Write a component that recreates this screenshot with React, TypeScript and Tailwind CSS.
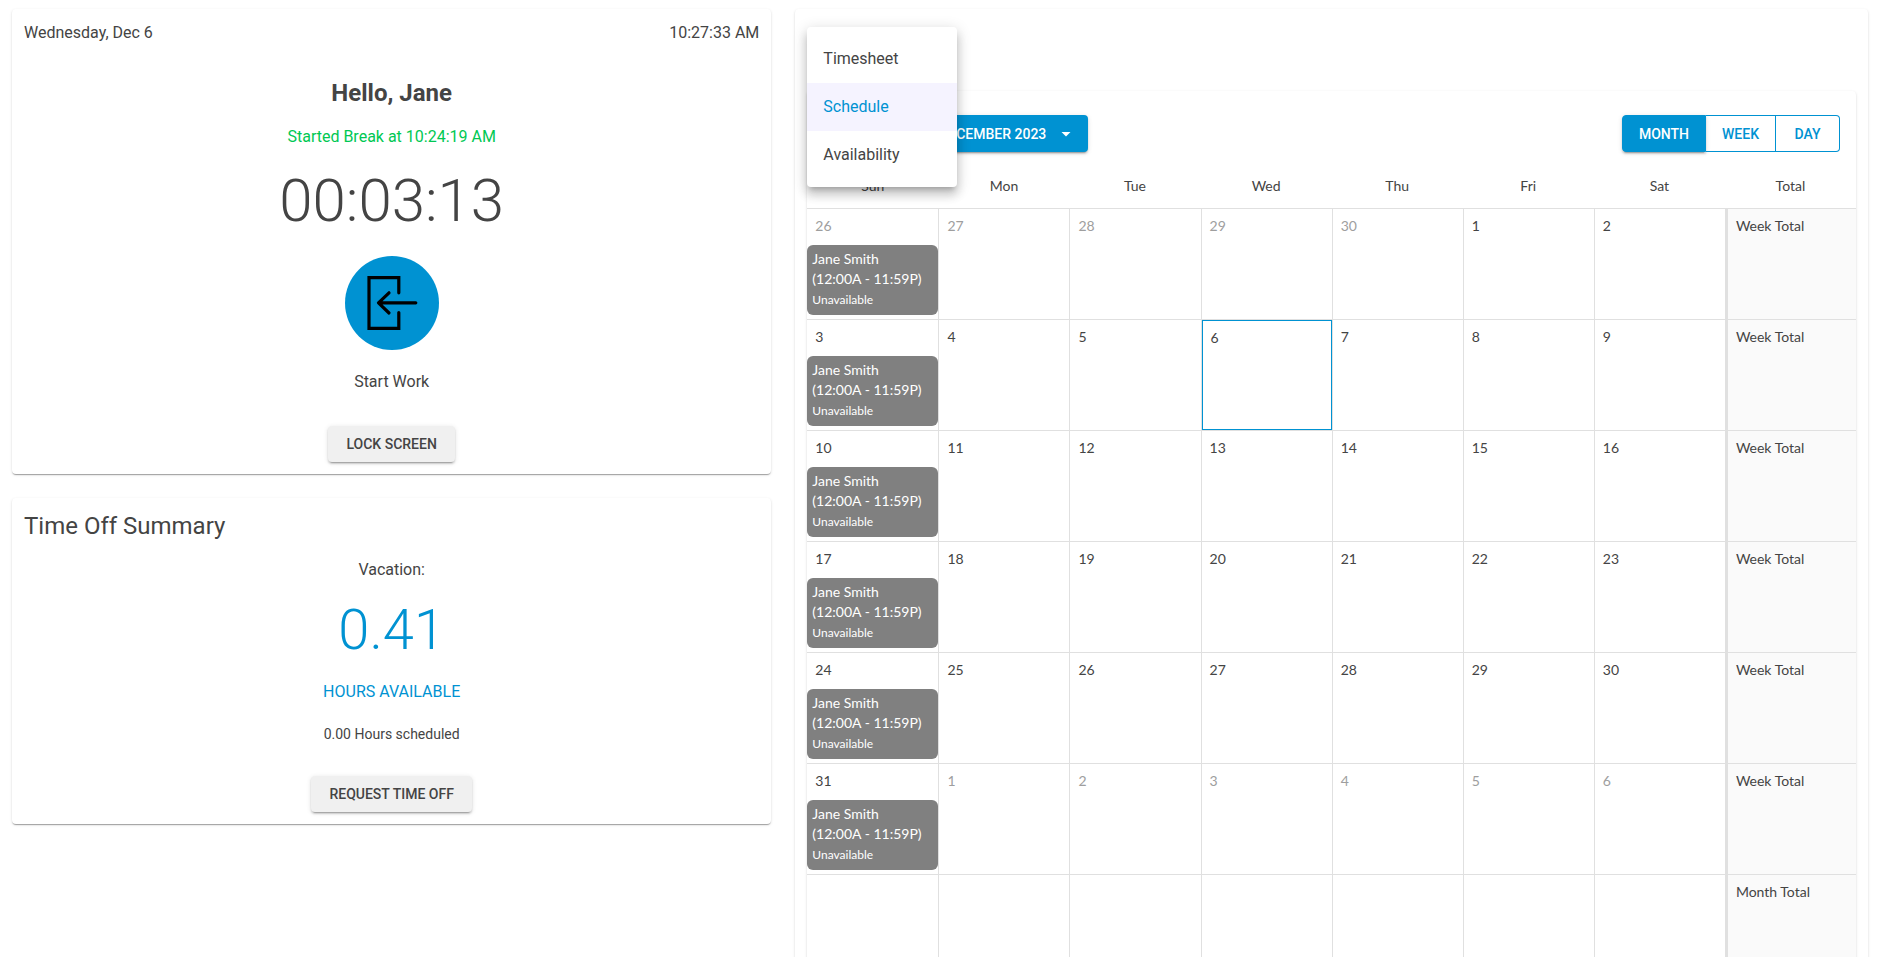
import { useState } from "react";
import clsx from "clsx";

const DAYS = ["Sun", "Mon", "Tue", "Wed", "Thu", "Fri", "Sat"];

// 42 days, starting on Sunday, Nov 26
const START = new Date(2023, 10, 26);
const WEEKS = [0, 1, 2, 3, 4, 5].map((week) =>
  DAYS.map((_, day) => {
    const date = new Date(START);
    date.setDate(START.getDate() + week * 7 + day);
    return {
      label: date.getDate(),
      muted: date.getMonth() !== 11,
      today: date.getMonth() === 11 && date.getDate() === 6,
    };
  })
);

const MENU = ["Timesheet", "Schedule", "Availability"];
const VIEWS = ["MONTH", "WEEK", "DAY"];

const CARD =
  "rounded bg-white shadow-[0_2px_1px_-1px_rgba(0,0,0,0.2),0_1px_1px_0_rgba(0,0,0,0.14),0_1px_3px_0_rgba(0,0,0,0.12)]";
const RAISED =
  "shadow-[0_3px_1px_-2px_rgba(0,0,0,0.2),0_2px_2px_0_rgba(0,0,0,0.14),0_1px_5px_0_rgba(0,0,0,0.12)]";
const GRAY_BUTTON = "h-9 rounded bg-[#f0f0f0] px-[18px] text-sm font-medium";
const DAY_CELL = "border-t border-l border-[#e0e0e0] p-0 first:border-l-0";
const TOTAL_CELL = "border-t border-l-3 border-[#e0e0e0] bg-[#fafafa] px-2 pt-[7px]";

function EnterIcon() {
  return (
    <svg viewBox="0 0 94 94" className="size-[94px]" fill="none" stroke="#000" strokeWidth="3.2">
      <path d="M53.8 36.8V21.6H24V72.4H53.8V56.6" strokeLinecap="round" />
      <path d="M70.8 46.8H33.5M44 36.8L33.5 46.8L44 57" strokeLinecap="round" strokeLinejoin="round" />
    </svg>
  );
}

function ClockCard() {
  return (
    <section className={clsx(CARD, "flex flex-col items-center p-3")}>
      <div className="flex w-full justify-between">
        <span>Wednesday, Dec 6</span>
        <span>10:27:33 AM</span>
      </div>
      <h1 className="mt-8 text-2xl font-bold">Hello, Jane</h1>
      <p className="mt-4 text-[#00c853]">Started Break at 10:24:19 AM</p>
      <p className="mt-[22px] text-[60px] leading-[60px] font-light">00:03:13</p>
      <button type="button" className="mt-[25px] flex flex-col items-center gap-5">
        <span className="rounded-full bg-[#0092d2]">
          <EnterIcon />
        </span>
        <span>Start Work</span>
      </button>
      <button type="button" className={clsx(RAISED, GRAY_BUTTON, "mt-8")}>
        LOCK SCREEN
      </button>
    </section>
  );
}

function TimeOffCard() {
  return (
    <section className={clsx(CARD, "flex flex-col items-center p-3")}>
      <h2 className="w-full text-2xl">Time Off Summary</h2>
      <p className="mt-4">Vacation:</p>
      <p className="mt-5 text-[56px] leading-[56px] font-light text-[#0092d2]">0.41</p>
      <p className="mt-[22px] text-[#0092d2]">HOURS AVAILABLE</p>
      <p className="mt-5 text-sm">0.00 Hours scheduled</p>
      <button type="button" className={clsx(RAISED, GRAY_BUTTON, "mt-8")}>
        REQUEST TIME OFF
      </button>
    </section>
  );
}

function TabMenu() {
  const [active, setActive] = useState("Schedule");

  return (
    <div className="absolute top-[18px] left-3 z-10 flex w-[150px] flex-col rounded bg-white py-2 shadow-[0_5px_5px_-3px_rgba(0,0,0,0.2),0_8px_10px_1px_rgba(0,0,0,0.14),0_3px_14px_2px_rgba(0,0,0,0.12)]">
      {MENU.map((item) => (
        <button
          key={item}
          type="button"
          onClick={() => setActive(item)}
          className={clsx("h-12 px-4 text-left", item === active && "bg-[#f5f3ff] text-[#0092d2]")}
        >
          {item}
        </button>
      ))}
    </div>
  );
}

function Toolbar() {
  const [view, setView] = useState("MONTH");

  return (
    <div className="flex justify-between px-4 pt-6 text-sm font-medium">
      <button
        type="button"
        className={clsx(RAISED, "flex h-[37px] w-[265px] items-center justify-end gap-2 rounded bg-[#0092d2] pr-[10px] text-white")}
      >
        DECEMBER 2023
        <svg viewBox="0 0 24 24" className="size-6" fill="currentColor">
          <path d="M7.5 10L12 14.5L16.5 10Z" />
        </svg>
      </button>

      <div className="flex">
        {VIEWS.map((name) => (
          <button
            key={name}
            type="button"
            onClick={() => setView(name)}
            className={clsx(
              "h-[37px] min-w-16 border border-l-0 border-[#0092d2] px-4 first:rounded-l first:border-l last:rounded-r",
              name === view ? clsx(RAISED, "bg-[#0092d2] text-white") : "text-[#0092d2]"
            )}
          >
            {name}
          </button>
        ))}
      </div>
    </div>
  );
}

function Shift() {
  return (
    <div className="mt-1 h-[70px] overflow-hidden rounded-md bg-[#808080] px-[5px] pt-1 text-sm whitespace-nowrap text-white">
      <p>Jane Smith</p>
      <p>(12:00A - 11:59P)</p>
      <p className="text-xs leading-[22px]">Unavailable</p>
    </div>
  );
}

function Calendar() {
  return (
    <table className="w-full table-fixed border-separate border-spacing-0 font-[Lato,sans-serif] text-sm">
      <thead>
        <tr className="h-14">
          {[...DAYS, "Total"].map((day) => (
            <th key={day} className="pt-3 font-normal">
              {day}
            </th>
          ))}
        </tr>
      </thead>
      <tbody>
        {WEEKS.map((week, i) => (
          <tr key={i} className="h-[111px] align-top">
            {week.map((day, col) => (
              <td key={col} className={DAY_CELL}>
                <div className={clsx(day.today && "h-[110px] border border-[#0092d2]")}>
                  <p className={clsx("px-2 pt-[7px] pb-[5px]", day.muted && "text-[#9e9e9e]")}>{day.label}</p>
                  {col === 0 && <Shift />}
                </div>
              </td>
            ))}
            <td className={TOTAL_CELL}>Week Total</td>
          </tr>
        ))}
        <tr className="h-[111px] align-top">
          {DAYS.map((day) => (
            <td key={day} className={DAY_CELL}></td>
          ))}
          <td className={TOTAL_CELL}>Month Total</td>
        </tr>
      </tbody>
    </table>
  );
}

export default function App() {
  return (
    <main className="flex h-screen overflow-hidden bg-white pt-[9px] pr-[5px] font-[Roboto,sans-serif] text-base text-[#444444]">
      <div className="flex w-5/12 flex-col gap-6 px-3">
        <ClockCard />
        <TimeOffCard />
      </div>

      <div className="w-7/12 px-3">
        <section className={clsx(CARD, "relative px-3 pt-[82px] pb-3")}>
          <TabMenu />
          <div className={CARD}>
            <Toolbar />
            <Calendar />
          </div>
        </section>
      </div>
    </main>
  );
}
